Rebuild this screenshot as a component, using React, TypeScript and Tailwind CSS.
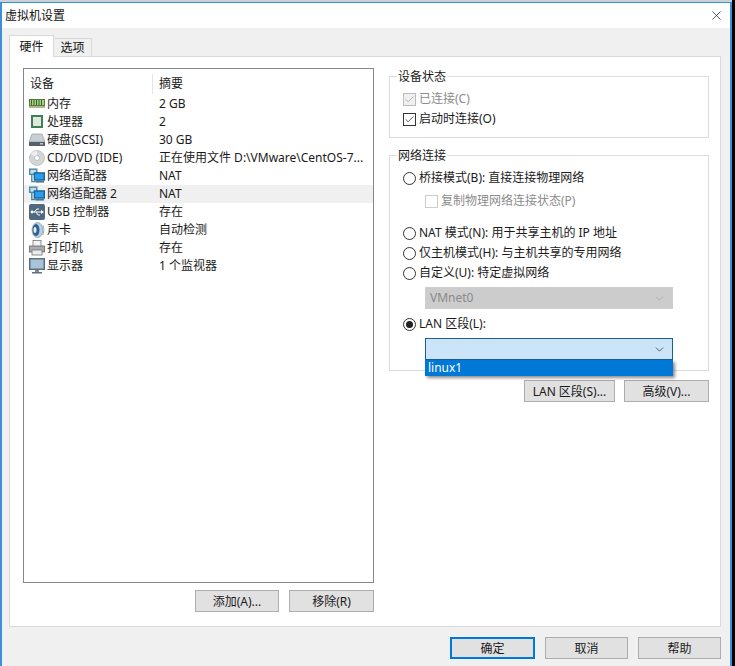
import { X, ChevronDown, Check } from "lucide-react";

const FONT = "font-['Noto_Sans','Noto_Sans_CJK_SC',sans-serif]";

function RamIcon() {
  return (
    <svg width="16" height="16" viewBox="0 0 16 16">
      <rect x="0" y="3" width="16" height="9" fill="#4f7d3c" />
      <rect x="1" y="4" width="14" height="5" fill="#a6d08a" />
      <path d="M2.5 4v5M5 4v5M7.5 4v5M10 4v5M12.5 4v5" stroke="#3a6428" strokeWidth="1" />
      <rect x="0" y="10" width="16" height="2" fill="#b4b58c" />
    </svg>
  );
}

function CpuIcon() {
  return (
    <svg width="16" height="16" viewBox="0 0 16 16">
      <rect x="2" y="1" width="12" height="13" fill="#3f7f55" />
      <rect x="4" y="3" width="8" height="9" fill="#dfe8da" />
    </svg>
  );
}

function DiskIcon() {
  return (
    <svg width="16" height="16" viewBox="0 0 16 16">
      <path d="M3 2h10l3 8H0z" fill="#c9ced3" stroke="#8b9197" strokeWidth="0.6" />
      <rect x="0" y="10" width="16" height="4" fill="#56616c" />
      <rect x="11" y="11" width="3" height="1.5" fill="#b7c2cb" />
    </svg>
  );
}

function CdIcon() {
  return (
    <svg width="16" height="16" viewBox="0 0 16 16">
      <circle cx="8" cy="8" r="7.5" fill="#d4d7d8" stroke="#a8abad" strokeWidth="0.6" />
      <path d="M8 8L2 4a7 7 0 0 1 6-3z" fill="#eff1f1" />
      <circle cx="8" cy="8" r="2.5" fill="#fff" stroke="#9da0a2" strokeWidth="0.6" />
    </svg>
  );
}

function NetIcon() {
  return (
    <svg width="16" height="16" viewBox="0 0 17 16">
      <rect x="0" y="0" width="9" height="7" fill="#4d8aa3" />
      <rect x="1.5" y="1.5" width="6" height="4" fill="#bfe0ea" />
      <path d="M3 7v7h4" stroke="#3f7f96" strokeWidth="1.4" fill="none" />
      <rect x="5" y="4" width="12" height="9" fill="#17629a" />
      <rect x="6.5" y="5.5" width="9" height="6" fill="#2a9df0" />
      <rect x="7" y="13" width="9" height="2" fill="#3f7f96" />
    </svg>
  );
}

function UsbIcon() {
  return (
    <svg width="16" height="16" viewBox="0 0 16 16">
      <rect x="0" y="0" width="16" height="16" rx="2" fill="#4f6a80" />
      <path d="M2 8h11M5 8l3-3h2M7 8l2 3h2" stroke="#fff" strokeWidth="1" fill="none" />
      <path d="M12 6l3 2-3 2z" fill="#fff" />
      <circle cx="3" cy="8" r="1.4" fill="#fff" />
    </svg>
  );
}

function SoundIcon() {
  return (
    <svg width="16" height="16" viewBox="0 0 16 16">
      <ellipse cx="8.5" cy="8" rx="5.5" ry="7.5" fill="#b9cfe2" stroke="#6c8aa6" strokeWidth="0.6" />
      <ellipse cx="7" cy="8" rx="3.5" ry="6" fill="#2f5f8f" />
      <ellipse cx="6" cy="8" rx="1.5" ry="3" fill="#e6eef5" />
      <path d="M14 3q2 5 0 10" stroke="#8aa6be" strokeWidth="0.8" fill="none" />
    </svg>
  );
}

function PrinterIcon() {
  return (
    <svg width="16" height="16" viewBox="0 0 16 16">
      <rect x="4" y="0.5" width="8" height="6" fill="#f2f2f2" stroke="#777" strokeWidth="0.8" />
      <rect x="0.5" y="6" width="15" height="6" fill="#a9acaf" stroke="#5f6368" strokeWidth="0.8" />
      <rect x="3" y="10" width="10" height="5" fill="#ececec" stroke="#777" strokeWidth="0.8" />
    </svg>
  );
}

function MonitorIcon() {
  return (
    <svg width="16" height="16" viewBox="0 0 16 16">
      <rect x="0" y="0" width="16" height="12" fill="#5f6f7d" />
      <rect x="1.5" y="1.5" width="13" height="9" fill="#a9c3d8" />
      <rect x="6" y="12" width="4" height="2" fill="#7e8b96" />
      <rect x="3" y="14" width="10" height="1.5" fill="#5f6f7d" />
    </svg>
  );
}

const DEVICES = [
  { icon: <RamIcon />, name: "内存", summary: "2 GB" },
  { icon: <CpuIcon />, name: "处理器", summary: "2" },
  { icon: <DiskIcon />, name: "硬盘(SCSI)", summary: "30 GB" },
  { icon: <CdIcon />, name: "CD/DVD (IDE)", summary: "正在使用文件 D:\\VMware\\CentOS-7..." },
  { icon: <NetIcon />, name: "网络适配器", summary: "NAT" },
  { icon: <NetIcon />, name: "网络适配器 2", summary: "NAT", selected: true },
  { icon: <UsbIcon />, name: "USB 控制器", summary: "存在" },
  { icon: <SoundIcon />, name: "声卡", summary: "自动检测" },
  { icon: <PrinterIcon />, name: "打印机", summary: "存在" },
  { icon: <MonitorIcon />, name: "显示器", summary: "1 个监视器" },
];

function Radio({ label, checked }: { label: string; checked?: boolean }) {
  return (
    <div className="flex h-[20px] items-center gap-[3px] text-[12px] text-[#1a1a1a]">
      <span className="flex h-[13px] w-[13px] shrink-0 items-center justify-center rounded-full border border-[#333] bg-white">
        {checked && <span className="h-[7px] w-[7px] rounded-full bg-[#222]" />}
      </span>
      <span className="whitespace-nowrap">{label}</span>
    </div>
  );
}

function Btn({ label, className, primary }: { label: string; className: string; primary?: boolean }) {
  return (
    <button
      className={`flex h-[22px] items-center justify-center bg-[#e1e1e1] pt-[1px] text-[12px] text-[#1a1a1a] ${
        primary ? "border-2 border-[#0078d7]" : "border border-[#adadad]"
      } ${className}`}
    >
      {label}
    </button>
  );
}

function Group({ title, className, children }: { title: string; className: string; children: React.ReactNode }) {
  return (
    <div className={`relative border border-[#dcdcdc] ${className}`}>
      <span className="absolute left-[7px] top-[-8px] bg-white px-[1px] text-[12px] leading-[16px] text-[#1a1a1a]">{title}</span>
      {children}
    </div>
  );
}

export default function App() {
  return (
    <div className={`flex h-[666px] w-[735px] flex-col overflow-hidden bg-black ${FONT}`}>
      {/* Window behind */}
      <div className="h-[2px] w-[732px] shrink-0 bg-[#c8d0d8]" />
      <div className="flex min-h-0 w-[732px] flex-1 flex-col border-x-2 border-t border-[#3f8fd8] bg-[#f0f0f0]">
        {/* Title bar */}
        <div className="flex h-[25px] shrink-0 items-center justify-between bg-white pl-[3px] pr-[6px]">
          <span className="text-[12px] text-[#111]">虚拟机设置</span>
          <X size={15} strokeWidth={1.2} className="text-[#222]" />
        </div>

        {/* Tabs */}
        <div className="flex h-[28px] shrink-0 items-end pl-[7px]">
          <div className="z-10 mb-[-1px] flex h-[22px] w-[45px] items-center justify-center border border-b-0 border-[#d9d9d9] bg-white text-[12px] text-[#111]">
            硬件
          </div>
          <div className="flex h-[18px] w-[38px] items-center justify-center border border-l-0 border-b-0 border-[#d9d9d9] bg-[#f0f0f0] text-[12px] text-[#111]">
            选项
          </div>
        </div>

        {/* Tab panel */}
        <div className="ml-[7px] flex h-[571px] w-[712px] shrink-0 flex-col border border-[#d9d9d9] bg-white pl-[13px] pt-[11px]">
          <div className="flex min-h-0 flex-1 gap-[15px]">
            {/* Device list */}
            <div className="flex w-[351px] shrink-0 flex-col">
              <div className="h-[515px] border border-[#828790] bg-white pt-[3px]">
                <div className="flex h-[23px] items-center text-[12px] text-[#1a1a1a]">
                  <span className="w-[129px] border-r border-[#e5e5e5] pl-[6px] leading-[20px]">设备</span>
                  <span className="pl-[6px]">摘要</span>
                </div>
                <div>
                  {DEVICES.map((d) => (
                    <div
                      key={d.name}
                      className={`flex h-[18px] items-center text-[12px] text-[#1a1a1a] ${d.selected ? "bg-[#f0f0f0]" : ""}`}
                    >
                      <span className="flex w-[135px] shrink-0 items-center gap-[2px] pl-[5px]">
                        {d.icon}
                        <span className="whitespace-nowrap">{d.name}</span>
                      </span>
                      <span className="whitespace-nowrap">{d.summary}</span>
                    </div>
                  ))}
                </div>
              </div>
              <div className="mt-[7px] flex justify-end gap-[10px]">
                <Btn label="添加(A)..." className="w-[84px]" />
                <Btn label="移除(R)" className="w-[85px]" />
              </div>
            </div>

            {/* Right column */}
            <div className="flex w-[320px] flex-col">
              <Group title="设备状态" className="mt-[8px] h-[62px] shrink-0 pl-[13px] pt-[12px]">
                <div className="flex h-[20px] items-center gap-[3px] text-[12px] text-[#8c8c8c]">
                  <span className="flex h-[13px] w-[13px] items-center justify-center border border-[#bbb] bg-[#f0f0f0]">
                    <Check size={11} strokeWidth={1.6} className="text-[#9a9a9a]" />
                  </span>
                  已连接(C)
                </div>
                <div className="flex h-[20px] items-center gap-[3px] text-[12px] text-[#1a1a1a]">
                  <span className="flex h-[13px] w-[13px] items-center justify-center border border-[#333] bg-white">
                    <Check size={11} strokeWidth={1.6} className="text-[#222]" />
                  </span>
                  启动时连接(O)
                </div>
              </Group>

              <Group title="网络连接" className="mt-[17px] h-[216px] shrink-0 pl-[13px] pt-[12px]">
                <Radio label="桥接模式(B): 直接连接物理网络" />
                <div className="ml-[22px] mt-[3px] flex h-[20px] items-center gap-[3px] text-[12px] text-[#8c8c8c]">
                  <span className="h-[13px] w-[13px] border border-[#ccc]" />
                  复制物理网络连接状态(P)
                </div>
                <div className="mt-[12px] flex flex-col">
                  <Radio label="NAT 模式(N): 用于共享主机的 IP 地址" />
                  <Radio label="仅主机模式(H): 与主机共享的专用网络" />
                  <Radio label="自定义(U): 特定虚拟网络" />
                </div>
                <div className="ml-[22px] mt-[4px] flex h-[22px] w-[248px] items-center justify-between border border-[#cfcfcf] bg-[#cccccc] pl-[4px] pr-[6px] text-[12px] text-[#8a8a8a]">
                  VMnet0
                  <ChevronDown size={13} strokeWidth={1.2} className="text-[#a5a5a5]" />
                </div>
                <div className="mt-[5px]">
                  <Radio label="LAN 区段(L):" checked />
                </div>
                <div className="relative ml-[22px] mt-[4px] w-[248px]">
                  <div className="flex h-[22px] items-center justify-end border border-[#1a5f96] bg-[#cce4f7] pr-[6px]">
                    <ChevronDown size={13} strokeWidth={1.4} className="text-[#333]" />
                  </div>
                  <div className="absolute left-0 right-0 top-[22px] z-10 h-[16px] bg-[#0078d7] pl-[3px] text-[12px] leading-[16px] text-white shadow-[2px_2px_3px_rgba(0,0,0,0.45)]">
                    linux1
                  </div>
                </div>
              </Group>

              <div className="mt-[9px] flex justify-end gap-[9px]">
                <Btn label="LAN 区段(S)..." className="w-[91px]" />
                <Btn label="高级(V)..." className="w-[85px]" />
              </div>
            </div>
          </div>
        </div>

        {/* Footer */}
        <div className="flex flex-1 items-start justify-end gap-[10px] pr-[9px] pt-[10px]">
          <Btn label="确定" className="w-[85px]" primary />
          <Btn label="取消" className="w-[83px]" />
          <Btn label="帮助" className="w-[83px]" />
        </div>
      </div>
    </div>
  );
}
